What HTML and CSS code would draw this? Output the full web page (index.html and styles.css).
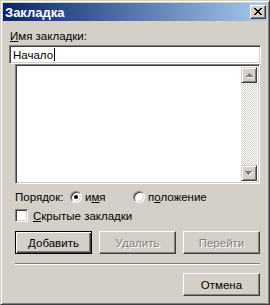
FILE: index.html
```html
<!DOCTYPE html>
<html lang="ru">
<head>
    <meta charset="UTF-8">
    <title>Закладка</title>
    <link rel="stylesheet" href="styles.css">
</head>
<body>
    <div class="window">
        <div class="titlebar">
            <span class="title">Закладка</span>
            <span class="close">
                <svg width="8" height="7" viewBox="0 0 8 7">
                    <path d="M0 0h2v1h-2zM6 0h2v1h-2zM1 1h2v1h-2zM5 1h2v1h-2zM2 2h4v1h-4zM3 3h2v1h-2zM2 4h4v1h-4zM1 5h2v1h-2zM5 5h2v1h-2zM0 6h2v1h-2zM6 6h2v1h-2z" fill="#000"/>
                </svg>
            </span>
        </div>
        <div class="body">
            <div class="label"><u>И</u>мя закладки:</div>
            <div class="field"><span>Начало</span><span class="caret"></span></div>
            <div class="section">
                <div class="list">
                    <div class="list-items"></div>
                    <div class="scrollbar">
                        <div class="sb-btn">
                            <svg width="7" height="5" viewBox="0 0 7 5"><path d="M1 4h6v1h-6z" fill="#fff"/><path d="M3 0h1v1h1v1h1v1h1v1h-7v-1h1v-1h1v-1h1z" fill="#808080"/></svg>
                        </div>
                        <div class="sb-track"></div>
                        <div class="sb-btn">
                            <svg width="8" height="5" viewBox="0 0 8 5"><path d="M1 1h7v1h-1v1h-1v1h-1v1h-1v-1h-1v-1h-1v-1h-1z" fill="#fff"/><path d="M0 0h7v1h-1v1h-1v1h-1v1h-1v-1h-1v-1h-1v-1h-1z" fill="#808080"/></svg>
                        </div>
                    </div>
                </div>
                <div class="order">
                    <span class="order-label">Порядок:</span>
                    <span class="option"><span class="radio checked"></span><span>и<u>м</u>я</span></span>
                    <span class="option"><span class="radio"></span><span>п<u>о</u>ложение</span></span>
                </div>
                <div class="check-row">
                    <span class="checkbox"></span><span><u>С</u>крытые закладки</span>
                </div>
                <div class="buttons">
                    <button class="btn default"><u>Д</u>обавить</button>
                    <button class="btn" disabled>Удалить</button>
                    <button class="btn" disabled>Перейти</button>
                </div>
                <div class="separator"></div>
                <div class="footer">
                    <button class="btn">Отмена</button>
                </div>
            </div>
        </div>
    </div>
</body>
</html>
```

FILE: styles.css
```css
body {
    margin: 0;
    font-family: "Liberation Sans", Arial, sans-serif;
    font-size: 11.5px;
    color: #000;
}

/* Window frame (classic 3D look) */
.window {
    width: 270px;
    height: 305px;
    box-sizing: border-box;
    background: #d4d0c8;
    border: 1px solid;
    border-color: #d4d0c8 #404040 #404040 #d4d0c8;
    box-shadow: inset 1px 1px #fff, inset -1px -1px #808080;
    padding: 2px;
    display: flex;
    flex-direction: column;
}

.titlebar {
    height: 18px;
    background: linear-gradient(to right, #0a246a, #a6caf0);
    display: flex;
    align-items: center;
    justify-content: space-between;
    padding: 0 1px 0 2px;
}

.title {
    color: #fff;
    font-weight: bold;
    font-size: 13px;
}

.close {
    width: 16px;
    height: 14px;
    box-sizing: border-box;
    background: #d4d0c8;
    border: 1px solid;
    border-color: #fff #404040 #404040 #fff;
    box-shadow: inset -1px -1px #808080;
    display: flex;
    align-items: center;
    justify-content: center;
    padding: 0 1px 1px 0;
}

.body {
    padding: 0 6px;
}

.label {
    margin-top: 9px;
    line-height: 13px;
    padding-left: 1px;
}

u {
    text-decoration: underline;
    text-underline-offset: 1px;
}

/* Sunken field */
.field,
.list,
.checkbox {
    box-sizing: border-box;
    background: #fff;
    border: 1px solid;
    border-color: #808080 #fff #fff #808080;
    box-shadow: inset 1px 1px #404040, inset -1px -1px #d4d0c8;
}

.field {
    margin-top: 2px;
    height: 19px;
    display: flex;
    align-items: center;
    padding-left: 3px;
}

.caret {
    width: 1px;
    height: 13px;
    background: #000;
    margin-left: 1px;
}

.section {
    margin: 0 1px 0 6px;
}

.list {
    height: 120px;
    display: flex;
    padding: 2px;
}

.list-items {
    flex: 1;
}

.scrollbar {
    width: 16px;
    display: flex;
    flex-direction: column;
}

.sb-btn {
    height: 16px;
    box-sizing: border-box;
    background: #d4d0c8;
    border: 1px solid;
    border-color: #d4d0c8 #404040 #404040 #d4d0c8;
    box-shadow: inset 1px 1px #fff, inset -1px -1px #808080;
    display: flex;
    align-items: center;
    justify-content: center;
}

.sb-track {
    flex: 1;
    background-image: conic-gradient(#fff 25%, #d4d0c8 0 50%, #fff 0 75%, #d4d0c8 0);
    background-size: 2px 2px;
}

.order {
    margin-top: 6px;
    height: 13px;
    display: flex;
    align-items: center;
}

.order-label {
    width: 55px;
    flex-shrink: 0;
}

.option {
    display: flex;
    align-items: center;
    gap: 3px;
    width: 63px;
    flex-shrink: 0;
}

.radio {
    width: 12px;
    height: 12px;
    flex-shrink: 0;
    box-sizing: border-box;
    border-radius: 50%;
    background: #fff;
    border: 1px solid;
    border-color: #808080 #fff #fff #808080;
    box-shadow: inset 1px 1px #404040, inset -1px -1px #d4d0c8;
    display: flex;
    align-items: center;
    justify-content: center;
}

.radio.checked::after {
    content: "";
    width: 4px;
    height: 4px;
    border-radius: 50%;
    background: #000;
}

.check-row {
    margin-top: 6px;
    display: flex;
    align-items: center;
    gap: 5px;
}

.checkbox {
    width: 13px;
    height: 13px;
    flex-shrink: 0;
}

.buttons {
    margin-top: 9px;
    display: grid;
    grid-template-columns: repeat(3, 1fr);
    gap: 7px;
}

.btn {
    height: 23px;
    box-sizing: border-box;
    font-family: inherit;
    font-size: 11.5px;
    color: #000;
    background: #d4d0c8;
    border: 1px solid;
    border-color: #fff #404040 #404040 #fff;
    box-shadow: inset -1px -1px #808080;
    padding: 0;
}

.btn.default {
    border-color: #000;
    box-shadow: inset 1px 1px #fff, inset -1px -1px #404040, inset -2px -2px #808080;
}

.btn:disabled {
    color: #808080;
    text-shadow: 1px 1px #fff;
}

.separator {
    margin-top: 9px;
    height: 1px;
    background: #808080;
    border-bottom: 1px solid #fff;
}

.footer {
    margin-top: 8px;
    display: flex;
    justify-content: flex-end;
}

.footer .btn {
    width: 77px;
}
```
